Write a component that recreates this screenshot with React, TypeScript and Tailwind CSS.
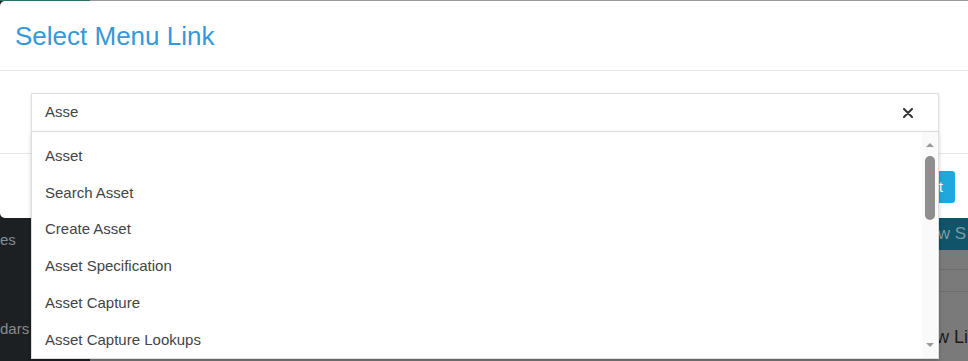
import React from 'react';

const items = [
  'Asset',
  'Search Asset',
  'Create Asset',
  'Asset Specification',
  'Asset Capture',
  'Asset Capture Lookups',
];

const font = { fontFamily: '"Liberation Sans", Arial, sans-serif' };

const App = () => {
  return (
    <div className="relative w-[968px] h-[361px] overflow-hidden bg-[#7a7a7a]" style={font}>
      <div className="flex h-full">
        <div className="w-[90px] shrink-0 bg-[#1d2023] flex flex-col">
          <div className="h-[1px] bg-[#2f6f66]" />
          <div className="h-[217px]" />
          <div className="pt-[11px] text-[15px] text-[#8a8a8a]">es</div>
          <div className="pt-[66px] text-[15px] text-[#8a8a8a]">dars</div>
        </div>
        <div className="flex-1 flex flex-col">
          <div className="h-[1px] bg-[#9a9a9a]" />
          <div className="h-[217px]" />
          <div className="h-[32px] bg-[#0f5468] flex justify-end items-center pr-[2px] text-[17px] text-[#7d9aa4]">
            View S
          </div>
          <div className="h-[20px] border-b border-[#6d6d6d]" />
          <div className="h-[22px] border-b border-[#6d6d6d]" />
          <div className="flex-1 flex justify-end items-end pb-[10px] text-[18px] text-[#1a1a1a]">
            New Li
          </div>
        </div>
      </div>

      {/* Modal */}
      <div className="absolute top-[1px] left-0 right-[-6px] h-[217px] bg-white rounded-[5px] flex flex-col">
        <div className="h-[70px] border-b border-[#e5e5e5] flex items-center pl-[15px] pt-[1px]">
          <h4 className="text-[26px] text-[#3498db] leading-none">Select Menu Link</h4>
        </div>
        <div className="h-[83px] pt-[22px] pl-[31px] pr-[35px] border-b border-[#e5e5e5]">
          <div className="relative w-[908px]">
            <div className="h-[39px] border border-[#e0e0e0] shadow-[0_1px_3px_rgba(0,0,0,0.12)] flex items-center justify-between pl-[13px] pr-[25px] bg-white">
              <span className="text-[15px] text-[#444]">Asse</span>
              <svg width="10" height="10" viewBox="0 0 10 10">
                <path d="M1 1L9 9M9 1L1 9" stroke="#333" strokeWidth="2" strokeLinecap="round" />
              </svg>
            </div>

            {/* Results dropdown */}
            <div className="absolute left-0 top-[38px] z-10 w-[908px] h-[228px] bg-white border border-[#dcdcdc] shadow-[0_2px_4px_rgba(0,0,0,0.2)] flex">
              <ul className="flex-1 pt-[6px]">
                {items.map((item) => (
                  <li key={item} className="h-[36.7px] flex items-center pl-[13px] text-[15px] text-[#444]">
                    {item}
                  </li>
                ))}
              </ul>
              <div className="w-[15px] mr-[1px] bg-[#fafafa] flex flex-col items-center">
                <div className="pt-[11px] h-[24px]">
                  <div className="w-0 h-0 border-l-[4px] border-r-[4px] border-b-[4px] border-l-transparent border-r-transparent border-b-[#9a9a9a]" />
                </div>
                <div className="w-[10px] h-[64px] rounded-full bg-[#8e8e8e]" />
                <div className="flex-1" />
                <div className="pb-[11px]">
                  <div className="w-0 h-0 border-l-[4px] border-r-[4px] border-t-[4px] border-l-transparent border-r-transparent border-t-[#9a9a9a]" />
                </div>
              </div>
            </div>
          </div>
        </div>
        <div className="flex-1 flex justify-end items-start pt-[17px] pr-[19px]">
          <button className="h-[32px] px-[12px] rounded-[3px] bg-[#1fa8dc] text-white text-[15px]">
            Select
          </button>
        </div>
      </div>
    </div>
  );
};

export default App;
